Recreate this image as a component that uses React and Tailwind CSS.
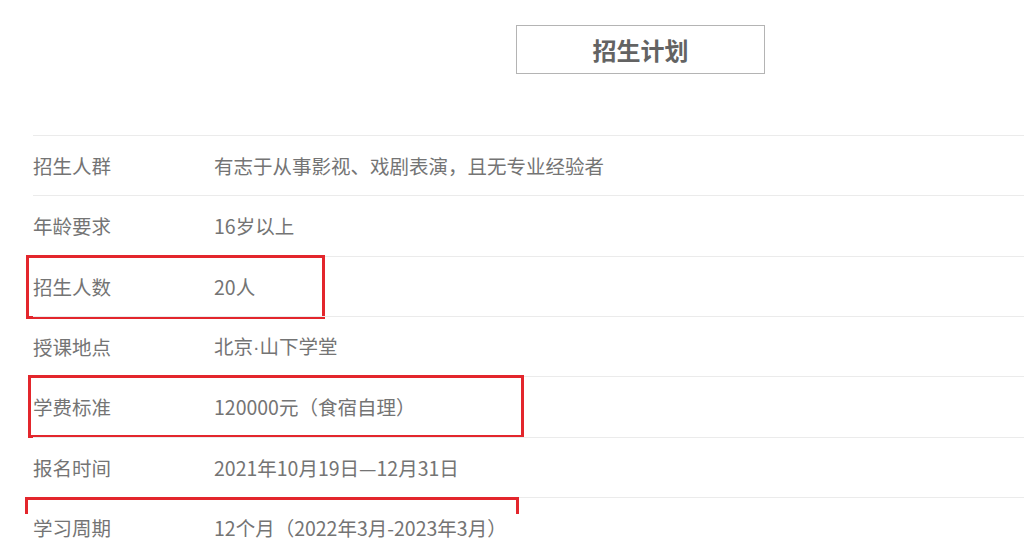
const rows = [
  { label: '招生人群', value: '有志于从事影视、戏剧表演，且无专业经验者' },
  { label: '年龄要求', value: '16岁以上' },
  { label: '招生人数', value: '20人', mark: 'full', box: 'left-[-7px] top-[-2px] w-[299px] h-[64px]' },
  { label: '授课地点', value: <>北京<span className="font-['Liberation_Sans']">·</span>山下学堂</> },
  { label: '学费标准', value: '120000元（食宿自理）', mark: 'full', box: 'left-[-5px] top-[-2px] w-[496px] h-[63px]' },
  { label: '报名时间', value: '2021年10月19日—12月31日' },
  { label: '学习周期', value: '12个月（2022年3月-2023年3月）', mark: 'top', box: 'left-[-8px] top-[-1px] w-[494px] h-[17px]' },
]

export default function App() {
  return (
    <div
      className="w-[1024px] h-[550px] overflow-hidden bg-white"
      style={{ fontFamily: '"Noto Sans CJK SC", "Noto Sans", sans-serif' }}
    >
      <div className="pt-[25px] pl-[516px]">
        <div className="w-[249px] h-[49px] border-[1.5px] border-[#b4b4b4] flex items-center justify-center text-[24px] font-semibold text-[#636363]">
          招生计划
        </div>
      </div>

      <div className="mt-[61px] pl-[33px]">
        {rows.map((row) => (
          <div
            key={row.label}
            className="relative h-[60.33px] border-t border-[#ebebeb] flex items-center text-[19.5px] text-[#747474]"
          >
            <span className="w-[181px] shrink-0">{row.label}</span>
            <span>{row.value}</span>
            {row.mark === 'full' && (
              <div className={`absolute border-[3px] border-[#e3262c] ${row.box}`} />
            )}
            {row.mark === 'top' && (
              <div className={`absolute border-[3px] border-b-0 border-[#e3262c] ${row.box}`} />
            )}
          </div>
        ))}
      </div>
    </div>
  )
}
